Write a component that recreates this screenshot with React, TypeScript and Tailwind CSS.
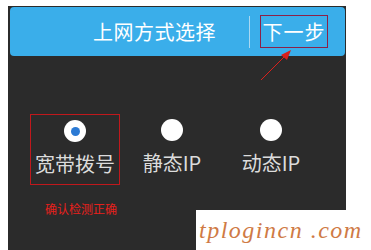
export default function App() {
  const cjk = { fontFamily: '"Noto Sans CJK SC", "Noto Sans", sans-serif' };
  return (
    <div className="relative h-[250px] w-[371px] overflow-hidden bg-white pl-[8px] pt-[6px]" style={cjk}>
      <div className="flex h-[244px] w-[338px] flex-col bg-[#2b2b2b] pl-[2px] pr-[1px] pt-[1px]">
        <div className="flex h-[49px] items-center rounded-[4px] bg-[#3aaeea] pl-[83px] text-white">
          <span className="text-[20px] leading-none tracking-[0.5px]">上网方式选择</span>
          <div className="ml-[33px] h-[32px] w-px bg-[#a9d8f2]" />
          <div className="ml-[10px] flex h-[33px] w-[68px] items-center justify-center border border-[#8c2148]">
            <span className="text-[20px] leading-none tracking-[1px]">下一步</span>
          </div>
        </div>

        <div className="mt-[58px] flex pl-[20px]">
          <div className="flex h-[71px] w-[90px] flex-col items-center border border-[#c0181c] pt-[5px]">
            <div className="flex h-[22px] w-[22px] items-center justify-center rounded-full bg-white">
              <div className="h-[9px] w-[9px] rounded-full bg-[#2b7ad4]" />
            </div>
            <span className="mt-[12px] text-[20px] leading-none text-[#dcdcdc]">宽带拨号</span>
          </div>
          <div className="ml-[7px] flex h-[71px] w-[90px] flex-col items-center pt-[5px]">
            <div className="h-[22px] w-[22px] rounded-full bg-white" />
            <span className="mt-[12px] text-[20px] leading-none text-[#dcdcdc]">静态IP</span>
          </div>
          <div className="ml-[9px] flex h-[71px] w-[90px] flex-col items-center pt-[5px]">
            <div className="h-[22px] w-[22px] rounded-full bg-white" />
            <span className="mt-[12px] text-[20px] leading-none text-[#dcdcdc]">动态IP</span>
          </div>
        </div>

        <div className="mt-[18px] pl-[35px] text-[12px] leading-none text-[#e8201c]">确认检测正确</div>
      </div>

      <svg className="absolute left-0 top-0" width="371" height="250" viewBox="0 0 371 250">
        <line x1="261" y1="80" x2="286" y2="55" stroke="#d9201c" strokeWidth="1" />
        <polygon points="291,50 281,55 287,60" fill="#d9201c" />
      </svg>

      <div
        className="absolute left-[196px] top-[210px] flex h-[40px] w-[175px] items-center whitespace-nowrap bg-white pl-[3px] text-[24px] italic leading-none tracking-[1.5px] text-[#cf7a45]"
        style={{ fontFamily: '"Liberation Serif", serif' }}
      >
        tplogincn .com
      </div>
    </div>
  );
}
